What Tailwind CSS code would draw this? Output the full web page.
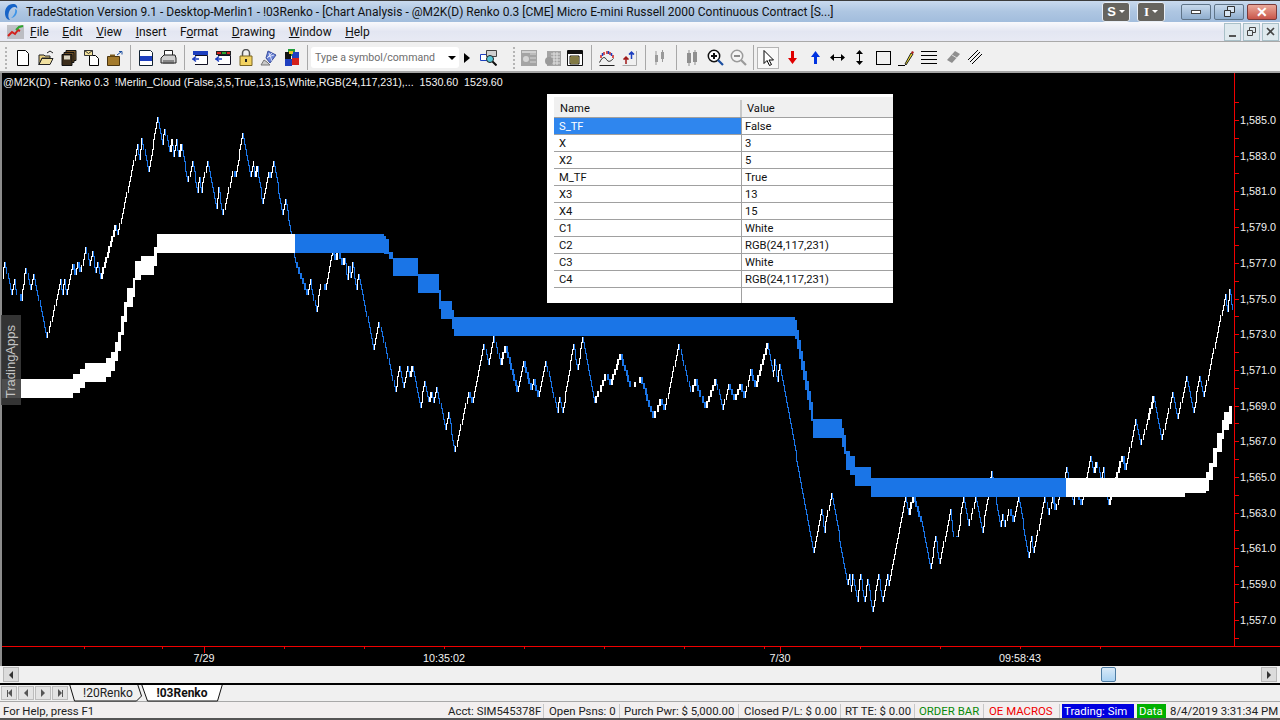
<!DOCTYPE html>
<html lang="en">
  <head>
    <meta charset="UTF-8" />
    <title>TradeStation</title>
    <script src="https://cdn.jsdelivr.net/npm/@tailwindcss/browser@4"></script>
  </head>
  <body class="w-[1280px] h-[720px] overflow-hidden bg-[#f0f0f0] font-['Roboto',sans-serif] text-[12px] text-black">
    <!-- title bar -->
    <div class="h-[22px] flex items-center border-t border-[#3c3c3c] bg-gradient-to-b from-[#c9daee] via-[#aec6e2] to-[#a2bddd]">
      <svg class="ml-[3px] w-[16px] h-[18px]" viewBox="0 0 16 18"><path d="M10 1C5 1 2 5 2 10c0 4 2 7 5 7-2-2-2-5-1-8 1-3 3-5 6-5 1 0 2 1 2 2 1-3-1-5-4-5z" fill="#1663c7"/><path d="M12 6c1 3-1 7-4 9 3 0 6-3 6-7 0-1-1-2-2-2z" fill="#3d94e8"/></svg>
      <div class="ml-[7px] w-[815px] whitespace-nowrap text-[12px] leading-none text-[#111]">TradeStation Version 9.1 - Desktop-Merlin1 - !03Renko - [Chart Analysis - @M2K(D) Renko 0.3 [CME] Micro E-mini Russell 2000 Continuous Contract [S...]</div>
      <div class="ml-[261px] w-[28px] h-[20px] flex items-center justify-center gap-[3px] rounded-[3px] border border-[#e8eef6] bg-[#66645f] text-white font-bold text-[13px] font-['Liberation_Sans',sans-serif]">S<span class="w-0 h-0 border-x-[3px] border-x-transparent border-t-[3px] border-t-white"></span></div>
      <div class="ml-[7px] w-[28px] h-[20px] flex items-center justify-center gap-[3px] rounded-[3px] border border-[#e8eef6] bg-[#66645f] text-white font-bold text-[13px] font-['Liberation_Serif',serif]">I<span class="w-0 h-0 border-x-[3px] border-x-transparent border-t-[3px] border-t-white"></span></div>
      <div class="ml-[16px] w-[30px] h-[16px] flex items-center justify-center rounded-[2px] border border-[#5f7488] bg-gradient-to-b from-[#c7d9ec] to-[#8fadcd]"><span class="w-[10px] h-[4px] bg-white border border-[#444]"></span></div>
      <div class="ml-[3px] w-[30px] h-[16px] flex items-center justify-center rounded-[2px] border border-[#5f7488] bg-gradient-to-b from-[#c7d9ec] to-[#8fadcd]">
        <svg class="w-[11px] h-[11px]" viewBox="0 0 11 11" fill="#d7e4f1" stroke="#333"><path d="M3.5.5h7v6h-7z"/><path d="M.5 4.5h6v6h-6z"/></svg>
      </div>
      <div class="ml-[3px] w-[30px] h-[16px] flex items-center justify-center rounded-[2px] border border-[#7a3a3a] bg-gradient-to-b from-[#e9a89a] to-[#c8554a] text-white font-bold text-[14px] leading-none font-['Liberation_Sans',sans-serif]">✕</div>
    </div>

    <!-- menu bar -->
    <div class="h-[20px] flex items-center bg-gradient-to-b from-[#f9f9fc] via-[#e3e6f2] to-[#e8eaf4] border-b border-[#a9a9a9]">
      <svg class="ml-[7px] w-[17px] h-[14px]" viewBox="0 0 17 14"><path d="M0 0h17v14H0z" fill="#8a8a8a" opacity=".45"/><path d="M1 11l4-4 3 2 3-4 2 1" fill="none" stroke="#d3201c" stroke-width="2"/><path d="M9 5l3-3 4-1" fill="none" stroke="#2fa52f" stroke-width="2"/></svg>
      <div class="ml-[6px] flex gap-[13.5px] text-[12px] leading-none text-[#111]">
        <span><u>F</u>ile</span><span><u>E</u>dit</span><span><u>V</u>iew</span><span><u>I</u>nsert</span><span>F<u>o</u>rmat</span><span><u>D</u>rawing</span><span><u>W</u>indow</span><span><u>H</u>elp</span>
      </div>
      <div class="ml-auto flex gap-[2px] pr-[1px]">
        <div class="w-[17px] h-[18px] border border-[#a9c0c8] bg-[#dfe9ee] flex items-end justify-center pb-[3px]"><span class="w-[7px] h-[2px] bg-[#555]"></span></div>
        <div class="w-[17px] h-[18px] border border-[#a9c0c8] bg-[#dfe9ee] flex items-center justify-center"><svg class="w-[9px] h-[9px]" viewBox="0 0 9 9" fill="none" stroke="#444"><path d="M2.5.5h6v5h-6z"/><path d="M.5 3.5h5v5h-5z" fill="#dfe9ee"/></svg></div>
        <div class="w-[17px] h-[18px] border border-[#a9c0c8] bg-[#dfe9ee] flex items-center justify-center"><svg class="w-[9px] h-[9px]" viewBox="0 0 9 9" stroke="#444" stroke-width="1.6"><path d="M1 1l7 7M8 1l-7 7"/></svg></div>
      </div>
    </div>

    <!-- toolbar -->
    <div class="h-[31px] flex items-center pt-[2px] border-b-2 border-[#a5a5a5] bg-[#f0f0f0]">
      <div class="ml-[5px] w-[2px] h-[22px] border-l-2 border-dotted border-[#b5b5b5]"></div>
      <div class="ml-[4px] flex items-center h-full">
        <div class="w-[23px] flex justify-center"><svg class="w-[16px] h-[16px]" viewBox="0 0 16 16"><path d="M2.5.5h8l3 3v12h-11z" fill="#fff" stroke="#000"/></svg></div>
        <div class="w-[23px] flex justify-center"><svg class="w-[16px] h-[16px]" viewBox="0 0 16 16"><path d="M1 5h5l1 1h5v2H4l-3 7z" fill="#e8cf80" stroke="#222"/><path d="M1 14.5l3-6h11l-3 6z" fill="#f0e0a0" stroke="#222"/><path d="M9 3l3-2 3 2" fill="none" stroke="#222"/></svg></div>
        <div class="w-[23px] flex justify-center"><svg class="w-[16px] h-[16px]" viewBox="0 0 16 16"><path d="M5 .5h10v10H5z" fill="#7c5a2c" stroke="#111"/><path d="M3 2.5h10v10H3z" fill="#6b4c24" stroke="#111"/><path d="M1 4.5h10v11H1z" fill="#3c2e1c" stroke="#111"/><path d="M3 5.5h6v4H3z" fill="#d9d3c0"/></svg></div>
        <div class="w-[23px] flex justify-center"><svg class="w-[16px] h-[16px]" viewBox="0 0 16 16"><path d="M5.500 5.500h6l3 3v7h-9z" fill="#fff" stroke="#000"/><path d="M.5.500h8v5h-8z" fill="#f4e39a" stroke="#333"/><path d="M.5.500l4 3 4-3" fill="none" stroke="#333"/></svg></div>
        <div class="w-[23px] flex justify-center"><svg class="w-[16px] h-[16px]" viewBox="0 0 16 16"><path d="M.5 6.500h12v9H.5z" fill="#a37a2c" stroke="#4a3510"/><path d="M3 4.500h5v2H3z" fill="#7a5a1c"/><path d="M10 5l4-3M12 1.500h3v3" fill="none" stroke="#1c4fa0"/></svg></div>
        <div class="w-[8px] flex justify-center"><span class="w-[1px] h-[25px] bg-[#a8a8a8]"></span></div>
        <div class="w-[23px] flex justify-center"><svg class="w-[16px] h-[16px]" viewBox="0 0 16 16"><path d="M1.500.5h11l2 2v13h-13z" fill="#fff" stroke="#123"/><path d="M2 6h12v5H2z" fill="#1d3fbf"/></svg></div>
        <div class="w-[23px] flex justify-center"><svg class="w-[17px] h-[16px]" viewBox="0 0 17 16"><path d="M4.500.5h8v5h-8z" fill="#fff" stroke="#222"/><path d="M1 8l3-3h11l1 3v5H1z" fill="#cfcfcf" stroke="#222"/><path d="M3 11h11M3 13h11" stroke="#444"/></svg></div>
        <div class="w-[8px] flex justify-center"><span class="w-[1px] h-[25px] bg-[#a8a8a8]"></span></div>
        <div class="w-[23px] flex justify-center"><svg class="w-[16px] h-[16px]" viewBox="0 0 16 16"><path d="M1 1h15v4H1z" fill="#1d3fbf"/><path d="M3 5.500h12.500v9H3" fill="#fff" stroke="#112"/><path d="M7 9H1l3-2.500M1 9l3 2.500" fill="none" stroke="#1d3fbf" stroke-width="1.500"/></svg></div>
        <div class="w-[23px] flex justify-center"><svg class="w-[16px] h-[16px]" viewBox="0 0 16 16"><path d="M1 1h15v4H1z" fill="#222"/><path d="M2 2h4v2H2z" fill="#d8241e"/><path d="M7 2h4v2H7z" fill="#2ea82e"/><path d="M12 2h3v2h-3z" fill="#d8241e"/><path d="M3 5.500h12.500v9H3" fill="#fff" stroke="#112"/><path d="M7 9H1l3-2.500M1 9l3 2.500" fill="none" stroke="#1d3fbf" stroke-width="1.500"/></svg></div>
        <div class="w-[23px] flex justify-center"><svg class="w-[14px] h-[17px]" viewBox="0 0 14 17"><path d="M3.500 7V4a3.500 3.500 0 017 0v3" fill="none" stroke="#555" stroke-width="1.500"/><path d="M1 7h12v9.500H1z" fill="#f2d260" stroke="#7a6420"/><path d="M6 10h2v3H6z" fill="#222"/></svg></div>
        <div class="w-[23px] flex justify-center"><svg class="w-[17px] h-[16px]" viewBox="0 0 17 16"><path d="M8 1l8 4-6 8-4-5z" fill="#6b83d6" stroke="#3a4f9e"/><path d="M9 3l3 8M12 3l-5 5M14 5l-6 2" stroke="#fff" stroke-width=".7"/><path d="M1 15l3-5 3 2 3 3z" fill="#c9c9c9" stroke="#777"/></svg></div>
        <div class="w-[23px] flex justify-center"><svg class="w-[16px] h-[17px]" viewBox="0 0 16 17"><path d="M4 0h7v7H4z" fill="#1f9c3a"/><path d="M1 3h6v7H1z" fill="#111"/><path d="M8 3h7v6H8z" fill="#1f3fbf"/><path d="M1 10h7v7H1z" fill="#1f3fbf"/><path d="M8 9h7v7H8z" fill="#d4201c"/><path d="M5 2h4v3H5z" fill="#e6c228"/></svg></div>
        <div class="w-[8px] flex justify-center"><span class="w-[1px] h-[25px] bg-[#a8a8a8]"></span></div>
        <div class="w-[148px] h-[21px] flex items-center justify-between rounded-[3px] bg-white pl-[4px] pr-[3px] text-[10.6px] text-[#6e6e6e] whitespace-nowrap">
          <span>Type a symbol/command</span>
          <span class="w-0 h-0 border-x-[4px] border-x-transparent border-t-[4px] border-t-black"></span>
        </div>
        <div class="w-[16px] flex justify-center"><span class="w-0 h-0 border-y-[5px] border-y-transparent border-l-[6px] border-l-black"></span></div>
        <div class="w-[27px] flex justify-center"><svg class="w-[17px] h-[16px]" viewBox="0 0 17 16"><path d="M.5 4.500h10v6H.5z" fill="#fff" stroke="#1d3fbf"/><path d="M6.500.5h10v6h-10z" fill="#d0d0d0" stroke="#444"/><circle cx="10" cy="9" r="3.500" fill="#59c7d8" stroke="#222"/><path d="M12.500 11.500l4 4" stroke="#111" stroke-width="2"/></svg></div>
        <div class="ml-[11px] w-[2px] h-[22px] border-l-2 border-dotted border-[#b5b5b5]"></div>
        <div class="ml-[6px] w-[16px]"><svg class="w-[16px] h-[16px]" viewBox="0 0 16 16"><path d="M0 0h16v16H0z" fill="#a4a4a4"/><path d="M1 2h14" stroke="#fff"/><path d="M9 4h6M9 8h6M9 12h6" stroke="#d5d5d5"/><circle cx="5" cy="9" r="3" fill="#d5d5d5"/></svg></div>
        <div class="ml-[8px] w-[16px]"><svg class="w-[16px] h-[16px]" viewBox="0 0 16 16"><path d="M2 1h14v15H2z" fill="#a4a4a4"/><path d="M6 4h9M6 7h9M6 10h9M6 13h9M9 2v13M12 2v13" stroke="#e0e0e0"/><circle cx="4" cy="11" r="4" fill="#9a9a9a"/></svg></div>
        <div class="ml-[6px] w-[16px]"><svg class="w-[16px] h-[16px]" viewBox="0 0 16 16"><path d="M.5.500h15v15H.5z" fill="#fff" stroke="#111"/><path d="M1 1h14v3H1z" fill="#111"/><path d="M3 6h9v8H3z" fill="#f2e27a" stroke="#111"/><path d="M4 8h7M4 10h7M4 12h7" stroke="#111"/></svg></div>
        <div class="ml-[8px] w-[1px] h-[25px] bg-[#a8a8a8]"></div>
        <div class="ml-[7px] w-[15px]"><svg class="w-[16px] h-[16px]" viewBox="0 0 16 16"><path d="M.5 12.500c3-6 5-6 7-3s4 2 7-1M.5 15.500h15" fill="none" stroke="#222"/><path d="M2 5v3M5 2v3M8 1v3M11 2v3M14 5v3" stroke="#d4201c" stroke-width="1.500"/><path d="M3.500 3v3M9.500 1v3M12.500 3v3" stroke="#1d3fbf" stroke-width="1.500"/></svg></div>
        <div class="ml-[8px] w-[15px]"><svg class="w-[15px] h-[16px]" viewBox="0 0 15 16"><path d="M.5 15.500h14M14.500 15.500V1" fill="none" stroke="#aaa"/><path d="M4 14V7M1.500 9.500L4 7l2.500 2.500" fill="#a01818" stroke="#a01818" stroke-width="1.500"/><path d="M9.500 9V2M7 4.500L9.500 2 12 4.500" fill="#1d3fbf" stroke="#1d3fbf" stroke-width="1.500"/></svg></div>
        <div class="ml-[8px] w-[1px] h-[25px] bg-[#a8a8a8]"></div>
        <div class="ml-[7px] w-[13px]"><svg class="w-[13px] h-[15px]" viewBox="0 0 13 15" fill="#9a9a9a"><path d="M2 5h3v7H2zM8 2h3v7H8z"/><path d="M3 1v14M9.500 0v12" stroke="#9a9a9a"/></svg></div>
        <div class="ml-[10px] w-[1px] h-[25px] bg-[#a8a8a8]"></div>
        <div class="ml-[9px] w-[12px]"><svg class="w-[12px] h-[16px]" viewBox="0 0 12 16" fill="#8f8f8f"><path d="M1 3h4v10H1zM7 2h4v10H7z"/><path d="M3 0v16M9 0v15" stroke="#8f8f8f"/></svg></div>
        <div class="ml-[9px] w-[17px]"><svg class="w-[17px] h-[17px]" viewBox="0 0 17 17"><circle cx="7" cy="7" r="5.700" fill="#fff" stroke="#111" stroke-width="1.500"/><path d="M7 4v6M4 7h6" stroke="#111" stroke-width="2"/><path d="M11 11l5 5" stroke="#1c4fa0" stroke-width="2.200"/></svg></div>
        <div class="ml-[6px] w-[17px]"><svg class="w-[17px] h-[17px]" viewBox="0 0 17 17"><circle cx="7" cy="7" r="5.700" fill="#f4f4f4" stroke="#9a9a9a" stroke-width="1.500"/><path d="M4 7h6" stroke="#8a8a8a" stroke-width="2"/><path d="M11 11l5 5" stroke="#9a9a9a" stroke-width="2.200"/></svg></div>
        <div class="ml-[6px] w-[1px] h-[25px] bg-[#a8a8a8]"></div>
        <div class="ml-[3px] w-[22px] h-[22px] flex items-center justify-center border border-[#b4b4b4] bg-[#f8f8f8]"><svg class="w-[11px] h-[16px]" viewBox="0 0 11 16"><path d="M1 .5v13l3-3 2.500 5 2-1-2.500-4.500h4.500z" fill="#fff" stroke="#000"/></svg></div>
        <div class="ml-[6px] w-[14px] flex justify-center"><svg class="w-[9px] h-[13px]" viewBox="0 0 9 13" fill="#e00000"><path d="M3 0h3v7h3l-4.500 6L0 7h3z"/></svg></div>
        <div class="ml-[9px] w-[14px] flex justify-center"><svg class="w-[9px] h-[13px]" viewBox="0 0 9 13" fill="#0033e0"><path d="M3 13h3V6h3L4.500 0 0 6h3z"/></svg></div>
        <div class="ml-[8px] w-[15px] flex justify-center"><svg class="w-[15px] h-[7px]" viewBox="0 0 15 7"><path d="M3 3h9v1H3z"/><path d="M4 0v7L0 3.500zM11 0v7l4-3.500z"/></svg></div>
        <div class="ml-[7px] w-[15px] flex justify-center"><svg class="w-[7px] h-[15px]" viewBox="0 0 7 15"><path d="M3 3h1v9H3z"/><path d="M0 4h7L3.500 0zM0 11h7l-3.500 4z"/></svg></div>
        <div class="ml-[9px] w-[15px] h-[14px] border border-black"></div>
        <div class="ml-[7px] w-[17px]"><svg class="w-[17px] h-[16px]" viewBox="0 0 17 16"><path d="M0 15.500h7" stroke="#000"/><path d="M8 15l-1-1 6-11 2 1z" fill="#f0e02a" stroke="#222"/><path d="M13 3l1-2 2 1-1 2z" fill="#b02020"/></svg></div>
        <div class="ml-[6px] w-[16px]"><svg class="w-[16px] h-[14px]" viewBox="0 0 16 14" stroke="#000"><path d="M0 .5h16M0 4.500h16M0 8.500h16M0 12.500h16"/></svg></div>
        <div class="ml-[9px] w-[15px]"><svg class="w-[15px] h-[15px]" viewBox="0 0 15 15"><path d="M1 10l8-9 5 3-8 9z" fill="#8f8f8f"/><path d="M6 5l5 3" stroke="#dcdcdc"/></svg></div>
        <div class="ml-[7px] w-[15px]"><svg class="w-[15px] h-[15px]" viewBox="0 0 15 15" stroke="#000"><path d="M0 10L10 0M2 12L12 2M4 14L14 4"/></svg></div>
      </div>
    </div>

    <!-- chart -->
    <div class="relative h-[593px] bg-black border-l-2 border-[#8c8c8c]">
      <svg id="chart" class="absolute left-[-2px] top-[-73px] w-[1280px] h-[720px]" viewBox="0 0 1280 720" shape-rendering="crispEdges" font-family="'Liberation Sans',sans-serif" font-size="10.8" fill="#f2f2f2"></svg>
      <div class="absolute left-[1px] top-[2px] h-[14px] leading-[14px] whitespace-pre text-[10.7px] text-[#f4f4f4] font-['Liberation_Sans',sans-serif]">@M2K(D) - Renko 0.3  !Merlin_Cloud (False,3,5,True,13,15,White,RGB(24,117,231),...  1530.60  1529.60</div>

      <!-- inputs table -->
      <div class="absolute left-[545px] top-[21px] w-[346px] h-[209px] bg-white pl-[7px] pt-[3px] text-[11.2px] leading-[17px] text-[#111]">
        <div class="h-[21px] flex items-center pt-[2px] bg-[#f0f0f0] border-b border-[#a0a0a0]"><div class="w-[188px] pl-[6px] border-r-2 border-[#c8c8c8]">Name</div><div class="pl-[5px]">Value</div></div>
        <div class="h-[17px] flex border-b border-[#a0a0a0]"><div class="w-[188px] pl-[5px] bg-[#2f86ee] text-white border-r border-[#a0a0a0]">S_TF</div><div class="pl-[3px]">False</div></div>
        <div class="h-[17px] flex border-b border-[#a0a0a0]"><div class="w-[188px] pl-[5px] border-r border-[#a0a0a0]">X</div><div class="pl-[3px]">3</div></div>
        <div class="h-[17px] flex border-b border-[#a0a0a0]"><div class="w-[188px] pl-[5px] border-r border-[#a0a0a0]">X2</div><div class="pl-[3px]">5</div></div>
        <div class="h-[17px] flex border-b border-[#a0a0a0]"><div class="w-[188px] pl-[5px] border-r border-[#a0a0a0]">M_TF</div><div class="pl-[3px]">True</div></div>
        <div class="h-[17px] flex border-b border-[#a0a0a0]"><div class="w-[188px] pl-[5px] border-r border-[#a0a0a0]">X3</div><div class="pl-[3px]">13</div></div>
        <div class="h-[17px] flex border-b border-[#a0a0a0]"><div class="w-[188px] pl-[5px] border-r border-[#a0a0a0]">X4</div><div class="pl-[3px]">15</div></div>
        <div class="h-[17px] flex border-b border-[#a0a0a0]"><div class="w-[188px] pl-[5px] border-r border-[#a0a0a0]">C1</div><div class="pl-[3px]">White</div></div>
        <div class="h-[17px] flex border-b border-[#a0a0a0]"><div class="w-[188px] pl-[5px] border-r border-[#a0a0a0]">C2</div><div class="pl-[3px]">RGB(24,117,231)</div></div>
        <div class="h-[17px] flex border-b border-[#a0a0a0]"><div class="w-[188px] pl-[5px] border-r border-[#a0a0a0]">C3</div><div class="pl-[3px]">White</div></div>
        <div class="h-[17px] flex border-b border-[#a0a0a0]"><div class="w-[188px] pl-[5px] border-r border-[#a0a0a0]">C4</div><div class="pl-[3px]">RGB(24,117,231)</div></div>
        <div class="h-[15px] flex"><div class="w-[188px] border-r border-[#a0a0a0]"></div></div>
      </div>

      <!-- side tab -->
      <div class="absolute left-[-1px] top-[242px] w-[20px] h-[90px] flex items-center justify-center pt-[3px] bg-[#3a3a3a]/90">
        <span class="[writing-mode:vertical-rl] rotate-180 whitespace-nowrap text-[13px] text-[#c4c4c4] font-['Liberation_Sans',sans-serif]">TradingApps</span>
      </div>
    </div>

    <!-- horizontal scroll bar -->
    <div class="h-[19px] flex items-center justify-between pl-[3px] pr-[3px] bg-[#f0f0f0] border-b-2 border-black">
      <div class="w-[16px] h-[15px] flex items-center justify-center border border-[#b8b8b8] bg-[#dcdcdc]"><span class="w-0 h-0 border-y-[4px] border-y-transparent border-r-[4px] border-r-[#333]"></span></div>
      <div class="ml-auto mr-[145px] w-[15px] h-[15px] rounded-[2px] border border-[#4d7ca3] bg-gradient-to-b from-[#d8e9f7] to-[#a9d2f2]"></div>
      <div class="w-[16px] h-[15px] flex items-center justify-center border border-[#b8b8b8] bg-[#dcdcdc]"><span class="w-0 h-0 border-y-[4px] border-y-transparent border-l-[4px] border-l-[#333]"></span></div>
    </div>

    <!-- sheet tabs -->
    <div class="h-[17px] flex items-center bg-[#f0f0f0] border-b border-[#a8a8a8]">
      <div class="ml-[1px] flex gap-[1px]">
        <div class="w-[16px] h-[14px] flex items-center justify-center bg-[#e3e3e3] border border-[#bcbcbc]"><span class="w-[1px] h-[7px] bg-[#555]"></span><span class="w-0 h-0 border-y-[4px] border-y-transparent border-r-[4px] border-r-[#555]"></span></div>
        <div class="w-[16px] h-[14px] flex items-center justify-center bg-[#e3e3e3] border border-[#bcbcbc]"><span class="w-0 h-0 border-y-[4px] border-y-transparent border-r-[4px] border-r-[#555]"></span></div>
        <div class="w-[16px] h-[14px] flex items-center justify-center bg-[#e3e3e3] border border-[#bcbcbc]"><span class="w-0 h-0 border-y-[4px] border-y-transparent border-l-[4px] border-l-[#555]"></span></div>
        <div class="w-[16px] h-[14px] flex items-center justify-center bg-[#e3e3e3] border border-[#bcbcbc]"><span class="w-0 h-0 border-y-[4px] border-y-transparent border-l-[4px] border-l-[#555]"></span><span class="w-[1px] h-[7px] bg-[#555]"></span></div>
      </div>
      <div class="relative ml-[1px] w-[78px] h-full flex items-center justify-center">
        <svg class="absolute inset-0 w-[78px] h-[17px]" viewBox="0 0 78 17" fill="#f0f0f0" stroke="#111"><path d="M.5-1l5 17h62l5-5-4-12"/></svg>
        <span class="relative text-[12px] text-[#222]">!20Renko</span>
      </div>
      <div class="relative ml-[-6px] w-[82px] h-full flex items-center justify-center">
        <svg class="absolute inset-0 w-[82px] h-[17px]" viewBox="0 0 82 17" fill="#fff" stroke="#111"><path d="M.5-1l6 17h70l5-17"/></svg>
        <span class="relative text-[12px] font-bold text-[#111]">!03Renko</span>
      </div>
    </div>

    <!-- status bar -->
    <div class="h-[18px] flex items-center pt-[2px] bg-[#f2efef] border-b-2 border-[#555] text-[11.4px] leading-[16px] whitespace-nowrap text-[#222]">
      <div class="w-[445px] shrink-0 pl-[3px]">For Help, press F1</div>
      <div class="w-[99px] shrink-0 pl-[3px] h-full flex items-center border-r border-[#c8c8c8]">Acct: SIM545378F</div>
      <div class="w-[76px] shrink-0 pl-[5px] h-full flex items-center border-r border-[#c8c8c8]">Open Psns: 0</div>
      <div class="w-[119px] shrink-0 pl-[4px] h-full flex items-center border-r border-[#c8c8c8]">Purch Pwr: $ 5,000.00</div>
      <div class="w-[102px] shrink-0 pl-[5px] h-full flex items-center border-r border-[#c8c8c8]">Closed P/L: $ 0.00</div>
      <div class="w-[74px] shrink-0 pl-[4px] h-full flex items-center border-r border-[#c8c8c8]">RT TE: $ 0.00</div>
      <div class="w-[69px] shrink-0 pl-[4px] h-full flex items-center border-r border-[#c8c8c8] text-[#0a8a0a]">ORDER BAR</div>
      <div class="w-[76px] shrink-0 pl-[5px] h-full flex items-center border-r border-[#c8c8c8] text-[#f00000]">OE MACROS</div>
      <div class="ml-[2px] w-[72px] shrink-0 pl-[2px] h-full flex items-center bg-[#0000e0] text-white">Trading: Sim</div>
      <div class="ml-[3px] w-[29px] shrink-0 pl-[2px] h-full flex items-center bg-[#00b000] text-white">Data</div>
      <div class="ml-[4px]">8/4/2019 3:31:34 PM</div>
    </div>

    <script>
      // price pivots [x, y] in page pixels, renko bricks get built between them
      const pivots = [[2,279],[4,263],[11,295],[14,280],[16,295],[21,301],[25,269],[30,290],[33,275],[46,338],[57,295],[60,280],[62,295],[64,280],[66,295],[72,265],[75,275],[77,263],[80,272],[85,248],[89,266],[92,252],[95,273],[97,263],[100,279],[115,226],[117,235],[137,145],[139,160],[141,139],[148,172],[157,118],[162,145],[164,130],[169,152],[172,140],[173,157],[176,140],[178,157],[181,145],[183,157],[187,182],[192,162],[197,193],[199,178],[201,193],[203,178],[207,162],[216,209],[218,188],[222,215],[232,172],[235,177],[242,134],[250,177],[253,162],[254,177],[257,167],[262,204],[268,173],[270,178],[273,162],[282,215],[285,200],[295,263],[307,295],[310,280],[312,295],[316,312],[320,285],[325,290],[332,250],[335,260],[337,253],[342,265],[344,259],[347,280],[348,267],[351,278],[352,263],[356,290],[358,275],[361,290],[373,350],[378,323],[382,337],[395,392],[399,367],[403,388],[407,367],[409,377],[412,367],[420,408],[424,382],[428,402],[431,393],[433,403],[436,388],[445,430],[448,413],[454,452],[468,393],[472,403],[483,345],[488,365],[493,337],[500,365],[505,347],[517,392],[523,362],[531,390],[533,380],[538,397],[545,362],[557,413],[559,398],[562,413],[573,345],[577,370],[582,338],[594,403],[605,375],[610,385],[620,355],[630,387],[640,378],[653,418],[660,400],[664,410],[678,345],[690,392],[695,380],[700,397],[705,408],[715,380],[722,410],[728,385],[734,400],[740,385],[744,398],[750,370],[755,387],[761,365],[767,344],[773,377],[774,360],[777,382],[779,365],[813,553],[821,510],[824,533],[826,517],[831,494],[847,585],[849,575],[851,592],[852,575],[857,602],[860,575],[864,602],[867,580],[872,612],[878,575],[882,602],[887,575],[888,586],[905,497],[908,515],[913,497],[921,522],[930,569],[935,537],[939,564],[950,510],[953,537],[957,537],[963,497],[968,526],[975,497],[982,533],[991,472],[1000,527],[1002,515],[1004,527],[1008,510],[1013,522],[1018,497],[1028,558],[1031,537],[1033,553],[1044,497],[1048,515],[1052,497],[1055,510],[1066,468],[1073,505],[1075,490],[1081,505],[1090,457],[1093,473],[1096,463],[1101,483],[1103,468],[1108,505],[1122,457],[1125,470],[1135,420],[1140,445],[1147,420],[1153,397],[1161,440],[1172,393],[1177,419],[1186,377],[1193,413],[1199,377],[1203,397],[1225,295],[1227,312],[1229,290],[1232,310]];

      // cloud pieces [x0, x1, top, bottom]
      const white = [[2,73,379,398],[73,80,374,393],[80,85,369,388],[85,106,363,382],[106,111,358,377],[111,115,352,371],[115,118,342,361],[118,121,332,351],[121,124,316,335],[124,127,302,322],[127,133,288,307],[133,135,278,297],[135,141,261,280],[141,154,256,275],[154,157,247,266],[157,295,234,253],[1066,1185,478,497],[1185,1206,478,493],[1206,1209,472,491],[1209,1213,463,480],[1213,1217,448,467],[1217,1222,433,452],[1222,1224,420,439],[1224,1229,412,430],[1229,1232,406,424]];
      const blue = [[295,384,234,253],[384,386,236,254],[386,389,239,254],[389,393,252,259],[393,418,258,276],[418,439,274,293],[439,441,290,309],[441,452,301,319],[452,454,310,329],[454,795,317,336],[813,842,419,438],[842,844,428,447],[844,846,435,454],[846,850,451,470],[850,855,456,475],[855,871,467,486],[871,1066,478,497]];
      for (let x = 795; x < 813; x += 2) {
        const top = 320 + (x - 795) * 5.1;
        blue.push([x, x + 2, Math.round(top), Math.round(top) + 19]);
      }

      const svg = document.getElementById("chart");
      const NS = "http://www.w3.org/2000/svg";
      function add(tag, attrs, text) {
        const el = document.createElementNS(NS, tag);
        for (const k in attrs) el.setAttribute(k, attrs[k]);
        if (text) el.textContent = text;
        svg.appendChild(el);
      }

      let up = "", down = "";
      for (let i = 1; i < pivots.length; i++) {
        const [ax, ay] = pivots[i - 1];
        const [bx, by] = pivots[i];
        const n = Math.max(1, Math.round(Math.abs(by - ay) / 5.36));
        const w = Math.min(2, Math.max(1, Math.round((bx - ax) / n)));
        for (let j = 0; j < n; j++) {
          const x = Math.round(ax + ((bx - ax) * (j + 1)) / n);
          const y0 = Math.round(ay + ((by - ay) * j) / n);
          const y1 = Math.round(ay + ((by - ay) * (j + 1)) / n);
          // one px of overlap keeps the staircase connected
          const seg = "M" + (x - w + 1) + " " + (Math.min(y0, y1) - 1) + "h" + w + "v" + (Math.abs(y1 - y0) + 1) + "h-" + w + "z";
          if (by < ay) up += seg;
          else down += seg;
        }
      }
      add("path", { d: down, fill: "#1a75e7" });
      add("path", { d: up, fill: "#ffffff" });
      for (const [x0, x1, t, b] of white) add("rect", { x: x0, y: t, width: x1 - x0, height: b - t, fill: "#ffffff" });
      for (const [x0, x1, t, b] of blue) add("rect", { x: x0, y: t, width: x1 - x0, height: b - t, fill: "#1a75e7" });

      // axes
      add("rect", { x: 2, y: 646, width: 1278, height: 1, fill: "#f00000" });
      add("rect", { x: 1234, y: 73, width: 1, height: 573, fill: "#f00000" });
      for (let p = 585, i = 0; p >= 557; p -= 2, i++) {
        const y = Math.round(120 + i * 35.7);
        add("rect", { x: 1235, y: y, width: 4, height: 1, fill: "#f00000" });
        add("rect", { x: 1235, y: y - 18, width: 4, height: 1, fill: "#f00000" });
        add("text", { x: 1240, y: y + 4, "shape-rendering": "auto" }, "1," + p + ".0");
      }
      add("rect", { x: 1235, y: 638, width: 4, height: 1, fill: "#f00000" });
      for (const x of [84, 162, 284, 364, 444, 524, 604, 684, 764, 860, 940, 1020, 1100]) add("rect", { x: x, y: 647, width: 1, height: 2, fill: "#f00000" });
      for (const x of [204, 780]) add("rect", { x: x, y: 647, width: 1, height: 6, fill: "#f00000" });
      add("text", { x: 204, y: 662, "text-anchor": "middle" }, "7/29");
      add("text", { x: 444, y: 662, "text-anchor": "middle" }, "10:35:02");
      add("text", { x: 780, y: 662, "text-anchor": "middle" }, "7/30");
      add("text", { x: 1020, y: 662, "text-anchor": "middle" }, "09:58:43");
    </script>
  </body>
</html>
